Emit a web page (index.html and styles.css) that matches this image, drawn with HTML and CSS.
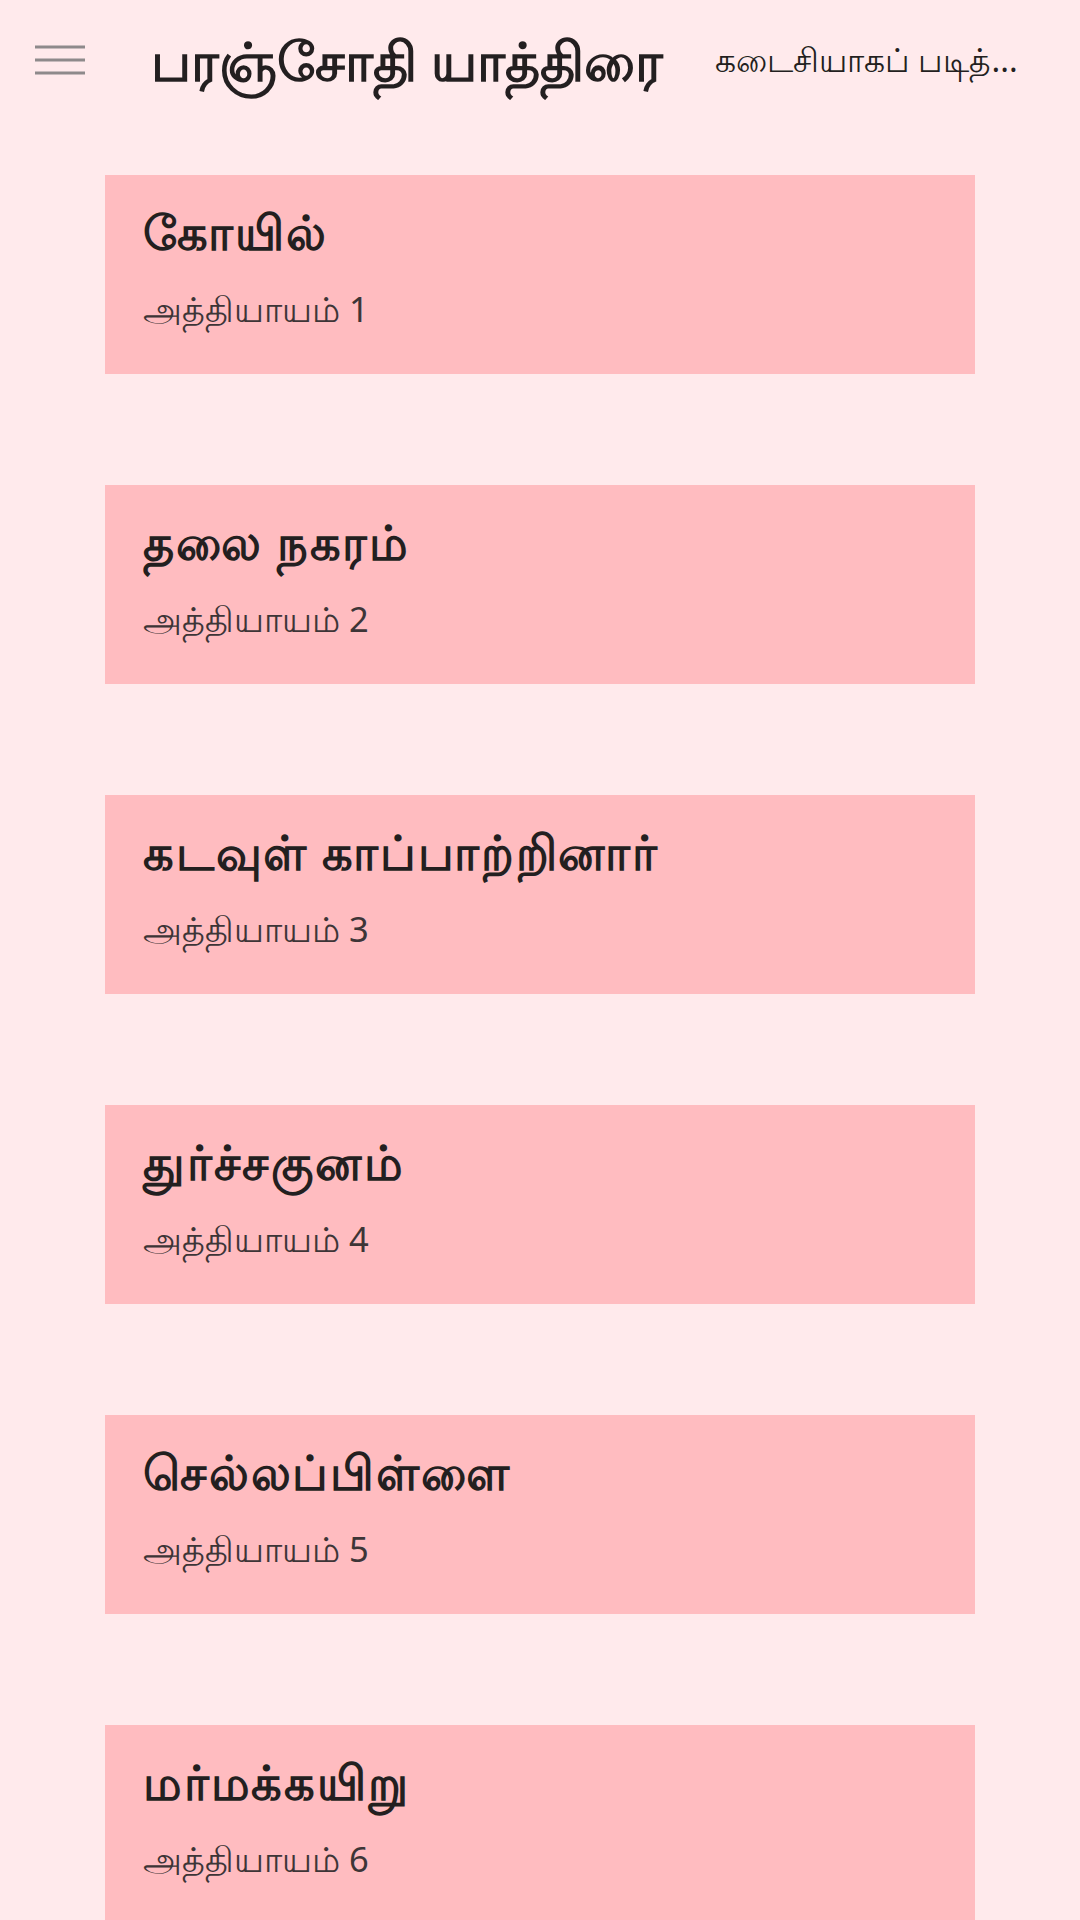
FILE: index.html
```html
<!DOCTYPE html>
<html lang="ta">
<head>
<meta charset="utf-8">
<title>பரஞ்சோதி யாத்திரை</title>
<link rel="stylesheet" href="styles.css">
</head>
<body>
<header class="topbar">
  <button class="menu" aria-label="menu">
    <svg width="50" height="30" viewBox="0 0 50 30"><g stroke="#8e8a8b" stroke-width="3"><line x1="0" y1="2" x2="50" y2="2"/><line x1="0" y1="15" x2="50" y2="15"/><line x1="0" y1="28" x2="50" y2="28"/></g></svg>
  </button>
  <h1 class="title">பரஞ்சோதி யாத்திரை</h1>
  <span class="last">கடைசியாகப் படித்...</span>
</header>
<main class="list">
  <a class="card"><div class="ctitle">கோயில்</div><div class="csub">அத்தியாயம் 1</div></a>
  <a class="card"><div class="ctitle">தலை நகரம்</div><div class="csub">அத்தியாயம் 2</div></a>
  <a class="card"><div class="ctitle">கடவுள் காப்பாற்றினார்</div><div class="csub">அத்தியாயம் 3</div></a>
  <a class="card"><div class="ctitle">துர்ச்சகுனம்</div><div class="csub">அத்தியாயம் 4</div></a>
  <a class="card"><div class="ctitle">செல்லப்பிள்ளை</div><div class="csub">அத்தியாயம் 5</div></a>
  <a class="card"><div class="ctitle">மர்மக்கயிறு</div><div class="csub">அத்தியாயம் 6</div></a>
</main>
</body>
</html>
```
FILE: styles.css
```css
html, body {
  margin: 0;
  padding: 0;
  background: #ffeaec;
  height: 1920px;
  overflow: hidden;
}
body {
  font-family: "Noto Sans", sans-serif;
  color: #231f20;
}
.topbar {
  height: 120px;
  display: flex;
  align-items: center;
  padding: 0 0 0 35px;
}
.menu {
  background: none;
  border: 0;
  padding: 0;
  width: 50px;
  height: 30px;
  display: flex;
}
.title {
  margin: 0 0 0 66px;
  font-size: 54px;
  font-weight: 900;
  line-height: 1.2;
  white-space: nowrap;
}
.last {
  margin-left: 52px;
  font-size: 32.5px;
  white-space: nowrap;
}
.list {
  display: flex;
  flex-direction: column;
  gap: 111px;
  padding: 55px 105px 0 105px;
}
.card {
  display: flex;
  flex-direction: column;
  gap: 27px;
  height: 199px;
  box-sizing: border-box;
  padding: 28px 38px 0;
  background: #ffbcc0;
}
.ctitle {
  font-size: 48px;
  font-weight: 700;
  letter-spacing: 1.8px;
  line-height: 1.2;
}
.csub {
  font-size: 34.5px;
  line-height: 1.2;
  color: #3d3537;
}
```
